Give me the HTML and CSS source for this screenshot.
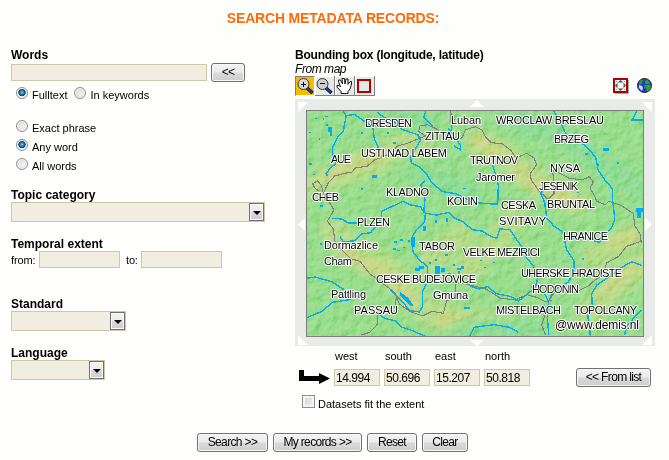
FILE: index.html
```html
<!DOCTYPE html>
<html lang="en">
<head>
<meta charset="utf-8">
<title>Search metadata records</title>
<link rel="stylesheet" href="styles.css">
</head>
<body>
<form class="page">
  <h1>SEARCH METADATA RECORDS:</h1>
  <div class="columns">
    <section class="criteria">
      <h2>Words</h2>
      <div class="words"><input class="field" type="text"><button class="btn sm" type="button">&lt;&lt;</button></div>
      <div class="radios">
        <label><input type="radio" name="scope" checked><span>Fulltext</span></label>
        <label><input type="radio" name="scope"><span>In keywords</span></label>
      </div>
      <div class="radios stack">
        <label><input type="radio" name="match"><span>Exact phrase</span></label>
        <label><input type="radio" name="match" checked><span>Any word</span></label>
        <label><input type="radio" name="match"><span>All words</span></label>
      </div>
      <h2>Topic category</h2>
      <div class="select topic"><i></i></div>
      <h2>Temporal extent</h2>
      <div class="dates"><span>from:</span><input class="field" type="text"><span class="to">to:</span><input class="field" type="text"></div>
      <h2>Standard</h2>
      <div class="select standard"><i></i></div>
      <h2>Language</h2>
      <div class="select language"><i></i></div>
    </section>

    <section class="extent">
      <h2 class="tight">Bounding box (longitude, latitude)</h2>
      <em>From map</em>
      <div class="toolbar">
        <span class="tool active"><svg width="18" height="18" viewBox="0 0 18 18"><path d="M11 11l5.5 5" stroke="#111" stroke-width="3.6"/><path d="M11 11l5 4.500" stroke="#2634c8" stroke-width="2"/><circle cx="7.500" cy="7" r="5.500" fill="#d8d8d8" stroke="#333"/><path d="M5 7.500h5M7.500 5v5" stroke="#000"/></svg></span>
        <span class="tool"><svg width="18" height="18" viewBox="0 0 18 18"><path d="M11 11l5.5 5" stroke="#111" stroke-width="3.6"/><path d="M11 11l5 4.500" stroke="#2634c8" stroke-width="2"/><circle cx="7.500" cy="7" r="5.500" fill="#ccc" stroke="#333"/><path d="M5 6.500h5" stroke="#000"/></svg></span>
        <span class="tool"><svg width="18" height="18" viewBox="0 0 18 18"><path d="M6 16.500V14.500L2 10V8.500h2L5.500 10 3.500 4.500V3h2l2 4-.500-5.500h2.500L10 7l1-5h2v5.500L15 4.500h1.500V7L15 12l-2 2.500v2z" fill="#fff" stroke="#111"/></svg></span>
        <span class="tool"><svg width="18" height="18" viewBox="0 0 18 18"><rect x="3" y="3" width="12" height="12" fill="none" stroke="#b00000" stroke-width="2"/></svg></span>
        <svg class="full" width="16" height="16" viewBox="0 0 16 16"><path d="M2 15.500h13.500V2" fill="none" stroke="#aaa"/><rect x="1" y="1" width="13" height="13" fill="#fff" stroke="#b00000" stroke-width="2"/><path d="M7.500 2l3 2.500h-6zM7.500 13l3-2.500h-6zM2 7.500l2.500-3v6zM13 7.500l-2.500-3v6z" fill="#555"/><path d="M3 3h1v1H3zM11 3h1v1h-1zM3 11h1v1H3zM11 11h1v1h-1z" fill="#888"/></svg>
        <svg width="16" height="16" viewBox="0 0 16 16"><circle cx="7.500" cy="7.500" r="7" fill="#2436d0" stroke="#222"/><path d="M2.500 3l2.500-1.500 1.500 1-2 1.500 1 1-2 1.500H2zM8 3l2-1.500 3 3-1 1.500H8zM8 7l5-.5 1 2-1.500 3.500-2.500 1.500-1-3.500-2-1z" fill="#28a42c"/><path d="M2 7l3 1 1 2-1 3-3-3z" fill="#c8d8f8"/></svg>
      </div>
      <div class="frame">
        <svg class="pan" width="360" height="247" viewBox="295 99 360 247" fill="#fff">
          <path d="M298 102h10l-10 10zM642 102h10v10zM298 335l10 10h-10zM652 335v10h-10zM470 107h14l-7-7zM470 340h14l-7 6zM305 218v13l-7-6.500zM645 218v13l7-6.500z"/>
        </svg>
        <svg class="map" width="338" height="227" viewBox="306 110 338 227">
          <defs>
            <filter id="soft" x="-20%" y="-20%" width="140%" height="140%"><feGaussianBlur stdDeviation="5"/></filter>
            <filter id="relief" x="0" y="0" width="100%" height="100%" color-interpolation-filters="sRGB">
              <feTurbulence type="fractalNoise" baseFrequency=".11" numOctaves="4" seed="8"/>
              <feColorMatrix values="0 0 0 0 0  0 0 0 0 0  0 0 0 0 0  1 0 0 0 0"/>
              <feDiffuseLighting surfaceScale="2" diffuseConstant=".78" lighting-color="#fff"><feDistantLight azimuth="225" elevation="45"/></feDiffuseLighting>
            </filter>
          </defs>
          <rect x="306" y="110" width="338" height="227" fill="#96dc8a"/>
          <g filter="url(#soft)" fill="none" stroke-linecap="round">
            <g stroke="#b4da85" stroke-width="26">
              <path d="M316 186l25-13 30-10 24-14 30-10M332 230l24 24 38 18 32 40 35 7 60 10M478 143l25 10 25 23 22 12 26 15M465 270l30-26 20-26M430 260l30-25M590 315l26-30 28-20M595 256l36-20"/>
            </g>
            <g stroke="#cfd482" stroke-width="10">
              <path d="M322 176l36-13 20-6M340 250l21 14 24 10 28 32M475 140l25 12M518 172l20 18M556 194l20 8M438 322l23-3M602 290l33-26M613 242l22-6"/>
            </g>
            <g stroke="#8ada92" stroke-width="20"><path d="M510 118l65 25 28 22 40 25M395 118l32 6M460 330l75-1M415 175l60 20"/></g>
          </g>
          <rect class="shade" x="306" y="110" width="338" height="227" filter="url(#relief)"/>
          <g class="rivers">
            <g transform="translate(300 105) scale(.33333)">
              <path d="M127 15l12 17-6 28-3 20-17 16-16 34 3 28 8 18-14 10-18 22M139 32l24-4 26 18 24 16 22-4M218 60l5 42 12 26 16 12M232 22l22 16 30 12 20 22 50 18 8 16-14 22-16 30 2 16 26 12 22 24 12 22 34 28 40 6 30 15 28 12 50 4h17l2-56-7-30-10-30M378 15l-6 22 28 28M445 70l36 50 0 14-20-12M452 25l10 20M375 225l-12 14 4 18 8 26-4 40"/>
              <path d="M760 18l20 28 14 34 20 20 36 18 24 22 14 20 6 34 20 30 24 28v36l4 30 2 26-10 26-24 22-12 20-26-8-16-22-24 20-22-2M1030 45h-34l14-26M720 262l14 30 6 46 22 26 26 16 12 54 22 34v34l-18 30-30 14-20 24-8 20M725 265l4-20"/>
              <path d="M20 520l25-4 50 14 34 22 36 20 24 14M20 638l44-18 34-28 50-8 20-14M95 340l30 2 20 12h28M245 345v-26l30-14 34-16 26 12 28 4M120 395l10 16 34-4 22-20 26-4 30-38M360 305l16 20-2 26-24 22-16 28 5 40 20 24 23 20v44l-14 30v44l-10 18-28-4-24-28-36-34M376 325l34 5 36-8 16 16 30 14 24 22 30 4 26 16 18 6 10-28 30 2 20 30 20 28 10 26 22 28 12 30-8 32-18 14-32 26-26-14-42-8-24-22-26 8-26-8-14-12M235 625l20 16 30 6 22 20 36 12 30 14M510 693l12-26 60-8 46 8 26 14M692 545l42 20 12 28-4 40 4 56M1027 482l-32-12-28 16-38 28-38 26-16 26 2 38-14 24 8 64M1025 615l-22 22-22 26-8 28"/>
            </g>
            <g transform="translate(300 105) scale(.33333)" class="lake">
              <path d="M215 210h15v10h-15zM85 65h12v28h-6V82h-6zM908 130h18v8h-18zM405 482h16v24h-16zM424 490h12v10h-12zM345 490h16v8h-16zM358 484h14v8h-14zM300 560l26 20 16 24-12-2-30-30zM1008 310h20v12h-20zM1012 322h10v16h-10zM492 606h18v6h-18zM370 362h8v16h-8zM336 395h8v30h-8zM470 490h12v6h-12zM475 498h6v8h-6z"/>
              <path d="M28 80h5v5h-5zM45 38h6v4h-6zM68 40h5v5h-5zM75 32h8v4h-8zM78 58h5v4h-5zM56 100h5v5h-5zM28 175h8v5h-8zM38 206h8v4h-8zM78 208h6v5h-6zM182 250h7v5h-7zM60 300h8v5h-8zM182 82h6v6h-6zM240 60h6v5h-6zM262 80h6v8h-6zM280 112h8v6h-8zM244 150h8v6h-8zM490 248h8v5h-8zM855 145h10v5h-10zM892 178h5v5h-5zM950 172h6v4h-6zM830 260h6v4h-6zM846 460h5v5h-5zM60 415h6v5h-6zM282 408h8v5h-8zM300 402h8v5h-8zM280 430h7v6h-7zM292 434h8v5h-8zM310 425h6v5h-6zM325 405h6v7h-6zM438 340h6v12h-6zM405 345h5v8h-5zM404 462h6v6h-6zM436 448h8v4h-8zM458 478h6v6h-6zM445 505h8v5h-8zM484 484h8v8h-8zM388 470h6v8h-6zM540 465h6v4h-6zM552 485h5v5h-5zM400 520h8v5h-8zM580 470h5v5h-5z"/>
            </g>
          </g>
          <g class="borders" transform="translate(300 105) scale(.33333)">
            <path d="M70 265l-6-24-12-14-14 10 8 14 10 6M70 265l14-30 20-22 30-8 22-4 12-14 32-2 24-20 20-8 26-12 22-22 30-8 34-14 20-8-20-14 4-16 22-4 30 14 12 12 22-2 16 18 24-2 10-24 30-10 20 10 10 20 18 18 34 4 26 20 14 22 32-14 22 14 8 20-20 28 4 18 24 34 26 24 18-18v-26l-4-42 22 8 26 14 40 6 22-10 12 16-10 18 14 24 6 16 26 10 10-10 36 12 38 24 4 36 16 26 4 26M452 16l2 62"/>
            <path d="M70 265l20 30 12 20-20 34 18 22 4 36 26 32 22 22 28 8 28 36 38 28 38 30 14 34 34 24 36 12 28-14 34 6 10-38 26-8v-50M290 570l-6 40M235 620l-4 40-22 22-24 8M458 532l40 5 32 8 30 8 40 26 46 6 34-16 30 8 28 14 18-6M735 630l-10 30 12 30M745 590l20-30 34-4M838 556l28-14 20-18 24-16 10-34 36-20 24-30 46-16"/>
          </g>
          <g class="places">
            <text x="365" y="127" textLength="47">DRESDEN</text>
            <text x="425" y="140" textLength="35">ZITTAU</text>
            <text x="451" y="124" textLength="30">Luban</text>
            <text x="496" y="124" textLength="108">WROCLAW BRESLAU</text>
            <text x="554" y="143" textLength="35">BRZEG</text>
            <text x="361" y="157" textLength="86">USTI NAD LABEM</text>
            <text x="331" y="163" textLength="20">AUE</text>
            <text x="470" y="164" textLength="48">TRUTNOV</text>
            <text x="476" y="181" textLength="39">Jaromer</text>
            <text x="550" y="172" textLength="30">NYSA</text>
            <text x="539" y="190" textLength="39">JESENIK</text>
            <text x="386" y="196" textLength="43">KLADNO</text>
            <text x="312" y="201" textLength="27">CHEB</text>
            <text x="447" y="205" textLength="31">KOLIN</text>
            <text x="501" y="209" textLength="35">CESKA</text>
            <text x="547" y="208" textLength="48">BRUNTAL</text>
            <text x="499" y="225" textLength="47">SVITAVY</text>
            <text x="357" y="226" textLength="33">PLZEN</text>
            <text x="563" y="240" textLength="45">HRANICE</text>
            <text x="324" y="249" textLength="54">Dormazlice</text>
            <text x="419" y="250" textLength="36">TABOR</text>
            <text x="463" y="256" textLength="77">VELKE MEZIRICI</text>
            <text x="324" y="265" textLength="28">Cham</text>
            <text x="376" y="283" textLength="100">CESKE BUDEJOVICE</text>
            <text x="521" y="277" textLength="101">UHERSKE HRADISTE</text>
            <text x="532" y="293" textLength="47">HODONIN</text>
            <text x="331" y="298" textLength="35">Pattling</text>
            <text x="433" y="299" textLength="35">Gmuna</text>
            <text x="354" y="314" textLength="44">PASSAU</text>
            <text x="496" y="314" textLength="65">MISTELBACH</text>
            <text x="574" y="314" textLength="63">TOPOLCANY</text>
            <text class="credit" x="555" y="329" textLength="84">@www.demis.nl</text>
          </g>
          <rect x="306.500" y="110.500" width="337" height="226" fill="none" stroke="#7d7d7d"/>
        </svg>
      </div>
      <div class="coords">
        <svg class="arrow" width="32" height="14" viewBox="0 0 32 14"><path d="M0 0h5v6h15V3l11 5.500L20 14v-3H0z"/></svg>
        <label>west<input class="field" value="14.994"></label>
        <label>south<input class="field" value="50.696"></label>
        <label>east<input class="field" value="15.207"></label>
        <label>north<input class="field" value="50.818"></label>
        <button class="btn list" type="button">&lt;&lt; From list</button>
      </div>
      <label class="fit"><input type="checkbox"><span>Datasets fit the extent</span></label>
    </section>
  </div>
  <div class="actions">
    <button class="btn search" type="button">Search &gt;&gt;</button>
    <button class="btn mine" type="button">My records &gt;&gt;</button>
    <button class="btn reset" type="button">Reset</button>
    <button class="btn clear" type="button">Clear</button>
  </div>
</form>
</body>
</html>
```
FILE: styles.css
```css
* { box-sizing: border-box; }
body {
  margin: 0;
  background: #fefffc;
  color: #000;
  font: 11px/14px "Liberation Sans", Arial, sans-serif;
}
.page { width: 669px; height: 460px; overflow: hidden; }
h1 {
  margin: 0;
  padding: 10px 3px 0 0;
  height: 48px;
  font-size: 14px;
  line-height: 16px;
  letter-spacing: -.17px;
  text-align: center;
  color: #ff6a0a;
}
h2 { margin: 0; font-size: 12px; line-height: 14px; white-space: nowrap; }
.tight { letter-spacing: -.2px; }
svg { display: block; flex: none; }
.columns { display: flex; height: 385px; }
.criteria { width: 284px; padding-left: 11px; margin-right: 11px; }
.extent { width: 360px; }
.field {
  display: block;
  height: 17px;
  margin: 0;
  padding: 0 1px;
  border: 1px solid #cdc8a6;
  border-radius: 0;
  background: #f1eee1;
  color: #000;
  font: 12px/15px "Liberation Sans", Arial, sans-serif;
  letter-spacing: -.45px;
}
.btn {
  height: 19px;
  padding: 0;
  border: 1px solid #707070;
  border-radius: 3px;
  background: linear-gradient(#f3f3f3, #ebebeb 48%, #d9dad9 52%, #cdcdcd);
  box-shadow: inset 0 0 0 1px #f8f8f8;
  color: #000;
  font: 12px/15px "Liberation Sans", Arial, sans-serif;
  letter-spacing: -.65px;
  white-space: nowrap;
}
.words { display: flex; align-items: center; gap: 4px; height: 19px; margin-top: 1px; }
.words .field { width: 196px; }
.words .sm { width: 34px; }
.radios { display: flex; gap: 7px; padding: 5px 0 0 5px; }
.radios label, .fit { display: flex; }
.radios span { padding: 1px 0 0 4px; line-height: 15px; }
.radios input {
  appearance: none;
  width: 12px;
  height: 12px;
  margin: 0;
  border: 1px solid #8e8f8f;
  border-radius: 50%;
  background: radial-gradient(circle at 60% 60%, #f2f2f2, #cfd3d5);
  box-shadow: inset 0 0 0 1px #f8f8f8;
}
.radios input:checked {
  background: radial-gradient(circle at 50% 45%, #8fe0f8 0, #2388bd 22%, #123e63 46%, #e4e8ea 54%);
}
.stack { flex-direction: column; gap: 3px; padding-top: 17px; margin-bottom: 14px; }
.stack label { height: 16px; }
.select { display: flex; justify-content: flex-end; height: 20px; border: 1px solid #cdc8a6; background: #f1eee1; }
.select i {
  display: grid;
  place-items: center;
  width: 15px;
  height: 18px;
  border: 1px solid #707070;
  background: linear-gradient(#f3f3f3, #ebebeb 48%, #dadada 52%, #cdcdcd);
  box-shadow: inset 0 0 0 1px #fafafa;
}
.select i::after { content: ""; margin-top: 2px; border: 4px solid transparent; border-top-color: #000; border-bottom: 0; }
.topic { width: 254px; margin-bottom: 15px; }
.standard { width: 115px; margin-bottom: 15px; }
.language { width: 94px; }
.dates { display: flex; height: 17px; margin-bottom: 29px; line-height: 19px; }
.dates span { width: 28px; letter-spacing: -.15px; }
.dates .to { width: 15px; margin-left: 6px; }
.dates .field { width: 81px; }
em { display: block; height: 14px; line-height: 14px; font-size: 12px; letter-spacing: -.45px; }
.toolbar { display: flex; height: 23px; }
.tool {
  width: 20px;
  height: 20px;
  padding-top: 1px;
  border: solid #808080;
  border-width: 0 1px 1px 0;
  background: #e7e9e7;
  box-shadow: inset 1px 1px #fff;
}
.tool.active { padding-top: 0; background: #f5bd00; border: 1px solid; border-color: #808080 #fff #fff #808080; box-shadow: none; }
.full { margin-left: 238px; margin-right: 8px; }
.toolbar > svg { margin-top: 2px; }
.frame { position: relative; height: 247px; padding: 11px 0 0 11px; background: #e8ebe8; }
.pan { position: absolute; top: 0; left: 0; }
.map { position: relative; }
.shade { mix-blend-mode: soft-light; opacity: .8; }
.rivers { fill: none; stroke: #00adf5; shape-rendering: crispEdges; }
.rivers g { stroke-width: 4.2; }
.rivers .lake { fill: #00adf5; stroke: none; }
.borders { fill: none; stroke: #7f7f7f; stroke-width: 3.2; shape-rendering: crispEdges; }
.places { font-size: 11px; fill: #000; stroke: #fff; stroke-width: 2px; stroke-linejoin: round; paint-order: stroke; }
.places .credit { font-size: 12px; }
.coords { display: flex; height: 49px; padding-top: 3px; }
.coords label { width: 46px; margin-right: 4px; text-indent: 1px; }
.coords .field { width: 46px; margin-top: 6px; text-indent: 0; }
.arrow { margin: 21px 3px 0 4px; }
.coords .list { width: 75px; margin: 19px 0 0 42px; }
.fit { padding-left: 7px; }
.fit input { appearance: none; width: 13px; height: 13px; margin: 0 3px 0 0; border: 1px solid #8e8f8f; background: linear-gradient(135deg, #cdd3d6, #f4f4f4); box-shadow: inset 0 0 0 2px #f4f4f4; }
.fit span { line-height: 19px; }
.actions { display: flex; gap: 5px; padding-left: 197px; }
.search { width: 71px; }
.mine { width: 89px; }
.reset { width: 50px; }
.clear { width: 46px; }
```
